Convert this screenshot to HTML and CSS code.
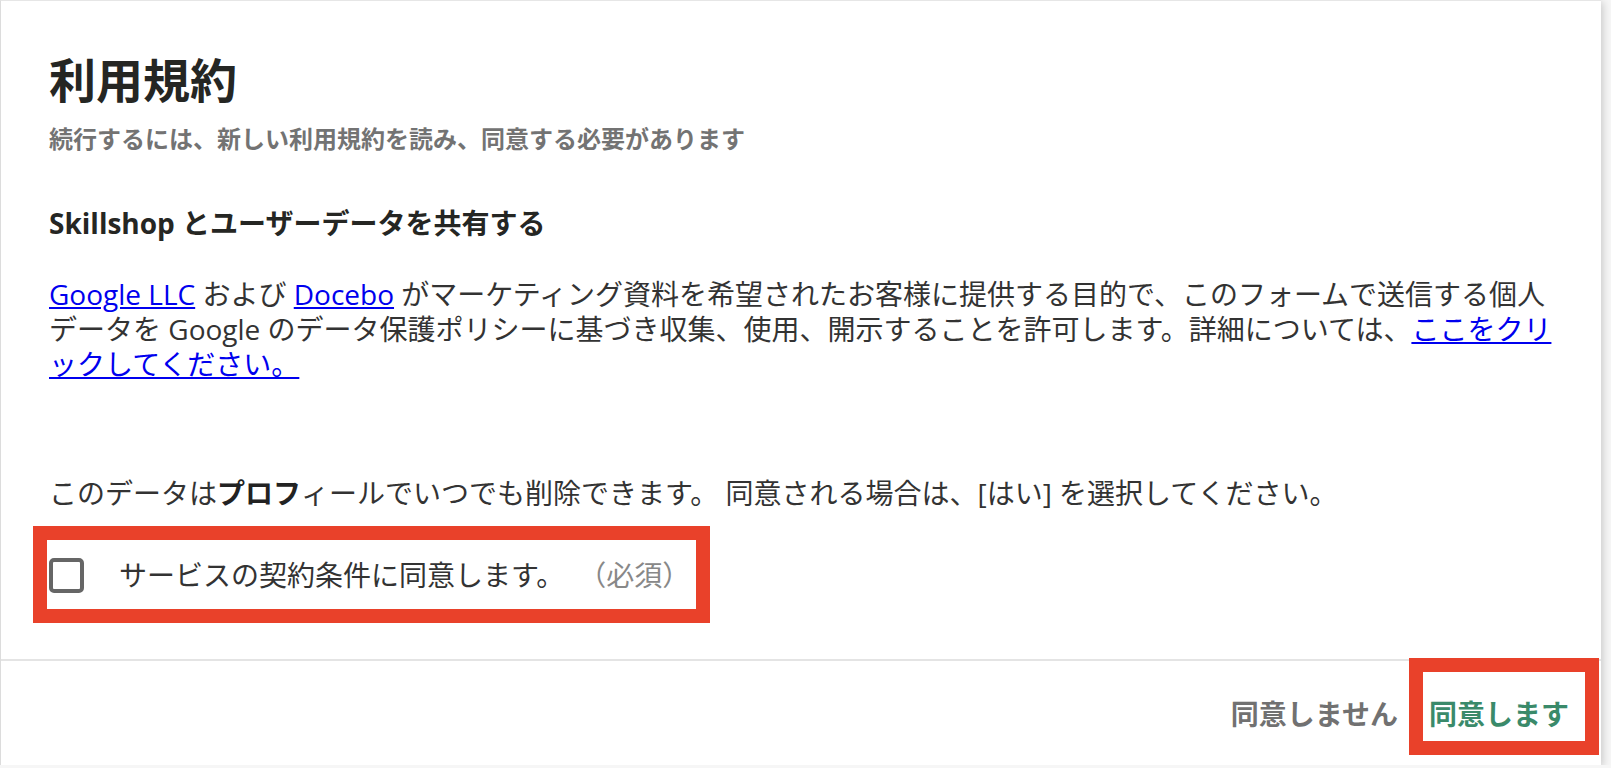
FILE: index.html
```html
<!DOCTYPE html>
<html lang="ja">
<head>
  <meta charset="UTF-8">
  <title>利用規約</title>
  <link rel="stylesheet" href="styles.css">
</head>
<body>

  <div class="dialog">
    <div class="dialog-body">
      <h1 class="title">利用規約</h1>
      <p class="subtitle">続行するには、新しい利用規約を読み、同意する必要があります</p>

      <h2 class="section-title">Skillshop とユーザーデータを共有する</h2>
      <p class="consent-text"><a href="#">Google LLC</a> および <a href="#">Docebo</a> がマーケティング資料を希望されたお客様に提供する目的で、このフォームで送信する個人データを Google のデータ保護ポリシーに基づき収集、使用、開示することを許可します。詳細については、<a href="#">ここをクリックしてください。</a></p>

      <p class="consent-note">このデータは<strong>プロフ</strong>ィールでいつでも削除できます。 同意される場合は、[はい] を選択してください。</p>

      <label class="highlight agree-row">
        <input type="checkbox" class="agree-check">
        <span class="agree-label">サービスの契約条件に同意します。</span>
        <span class="required">（必須）</span>
      </label>
    </div>

    <div class="dialog-footer">
      <button class="btn btn-decline">同意しません</button>
      <div class="highlight highlight-btn">
        <button class="btn btn-accept">同意します</button>
      </div>
    </div>
  </div>

</body>
</html>
```

FILE: styles.css
```css
* {
  box-sizing: border-box;
}

body {
  margin: 0;
  padding: 0;
  background: #f6f6f6;
  font-family: 'Open Sans', 'Noto Sans CJK JP', sans-serif;
  color: #333;
}

.dialog {
  width: 1601px;
  height: 765px;
  background: white;
  border-top: 1px solid #e6e6e6;
  border-left: 1px solid #dcdcdc;
  box-shadow: 2px 2px 8px rgba(0, 0, 0, 0.18);
  display: flex;
  flex-direction: column;
}

.dialog-body {
  flex: 1;
  padding: 51px 48px 0 48px;
}

.title {
  margin: 0;
  font-size: 47px;
  line-height: 56px;
  font-weight: bold;
  color: #252623;
}

.subtitle {
  margin: 16px 0 0;
  font-size: 24px;
  line-height: 30px;
  font-weight: bold;
  color: #737373;
}

.section-title {
  margin: 51px 0 0;
  font-size: 28px;
  line-height: 36px;
  font-weight: bold;
  color: #252623;
}

.consent-text {
  margin: 36px 0 0;
  font-size: 28px;
  line-height: 35px;
}

.consent-text a {
  color: #0000ee;
}

.consent-note {
  margin: 94px 0 0;
  font-size: 28px;
  line-height: 35px;
}

.consent-note strong {
  color: #222;
}

.highlight {
  border: 14px solid #e9412a;
}

.agree-row {
  display: flex;
  align-items: center;
  width: 677px;
  margin: 15px 0 0 -16px;
  padding: 18px 0 16px 2px;
  font-size: 28px;
  line-height: 35px;
  white-space: nowrap;
}

.agree-check {
  flex-shrink: 0;
  appearance: none;
  width: 35px;
  height: 35px;
  margin: 0 35px 0 0;
  border: 4px solid #666;
  border-radius: 5px;
  background: white;
}

.agree-label {
  flex-shrink: 0;
  color: #333;
}

.required {
  flex-shrink: 0;
  margin-left: 14px;
  color: #888;
}

.dialog-footer {
  height: 106px;
  border-top: 2px solid #e4e4e4;
  display: flex;
  justify-content: flex-end;
  align-items: flex-start;
  padding-right: 2px;
}

.btn {
  border: none;
  background: none;
  padding: 0;
  font-family: inherit;
  font-size: 28px;
  line-height: 36px;
  font-weight: bold;
  cursor: pointer;
}

.btn-decline {
  margin: 35px 11px 0 0;
  color: #717171;
}

.highlight-btn {
  margin-top: -3px;
  padding: 24px 16px 9px 6px;
}

.btn-accept {
  color: #3a8a6a;
}
```
